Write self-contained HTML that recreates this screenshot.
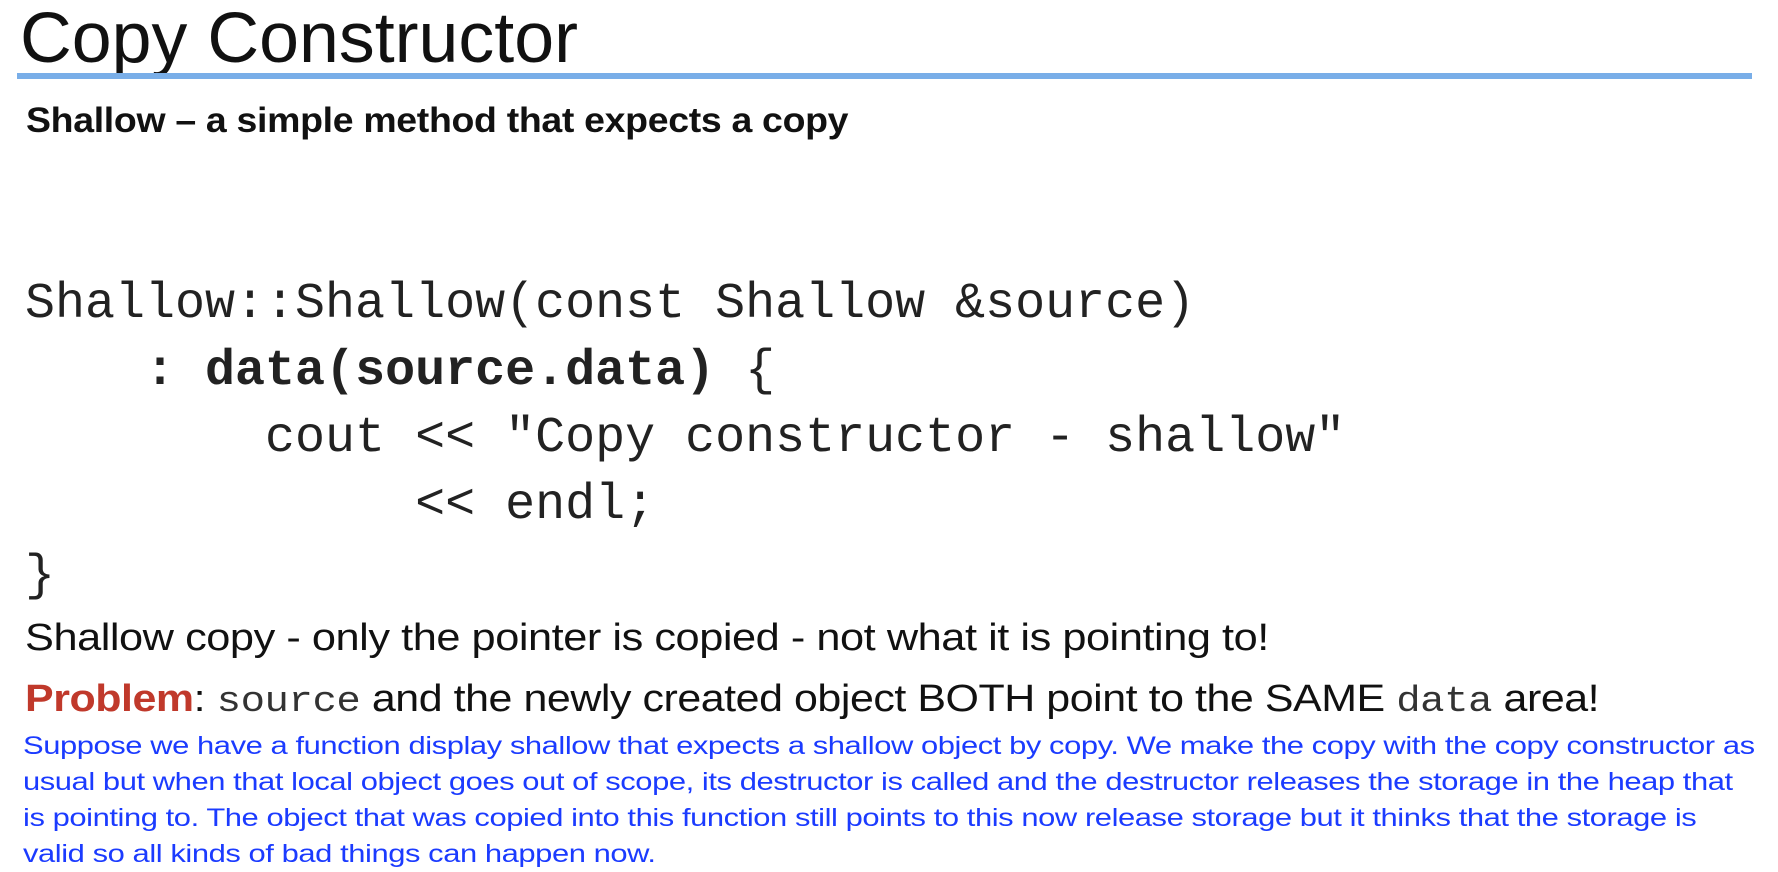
<!DOCTYPE html>
<html><head><style>
body{margin:0;width:1778px;height:868px;background:#fff;position:relative;overflow:hidden;font-family:"Liberation Sans",sans-serif;color:#111}
.a{position:absolute;white-space:pre;line-height:1;transform-origin:0 0}
.m{font-family:"Liberation Mono",monospace;font-size:50px;color:#222}
</style></head><body>
<div class="a" style="left:20px;top:3px;font-size:71px;color:#111;transform:scaleX(1.01)">Copy Constructor</div>
<div style="position:absolute;left:17px;top:73px;width:1735px;height:6px;background:#79aee8"></div>
<div class="a" style="left:26px;top:103px;font-size:35px;font-weight:bold;letter-spacing:-0.3px;transform:scaleX(1.07)">Shallow – a simple method that expects a copy</div>
<div class="a m" style="left:25px;top:280px">Shallow::Shallow(const Shallow &amp;source)</div>
<div class="a m" style="left:25px;top:347px">    <b>: data(source.data)</b> {</div>
<div class="a m" style="left:25px;top:414px">        cout &lt;&lt; "Copy constructor - shallow"</div>
<div class="a m" style="left:25px;top:481px">             &lt;&lt; endl;</div>
<div class="a m" style="left:25px;top:552px">}</div>
<div class="a" style="left:25px;top:619px;font-size:38px;letter-spacing:-0.4px;transform:scaleX(1.14)">Shallow copy - only the pointer is copied - not what it is pointing to!</div>
<div class="a" style="left:25px;top:680px;font-size:38px;letter-spacing:-0.4px;transform:scaleX(1.13)"><b style="color:#c0392b">Problem</b>: <span style="font-family:'Liberation Mono',monospace;font-size:36px;color:#333">source</span> and the newly created object BOTH point to the SAME <span style="font-family:'Liberation Mono',monospace;font-size:36px;color:#333">data</span> area!</div>
<div class="a" style="left:23px;top:728px;font-size:25px;line-height:36px;color:#1b3bff;white-space:nowrap;letter-spacing:-0.35px;transform:scaleX(1.237)">Suppose we have a function display shallow that expects a shallow object by copy. We make the copy with the copy constructor as<br>usual but when that local object goes out of scope, its destructor is called and the destructor releases the storage in the heap that<br>is pointing to. The object that was copied into this function still points to this now release storage but it thinks that the storage is<br>valid so all kinds of bad things can happen now.</div>
</body></html>
